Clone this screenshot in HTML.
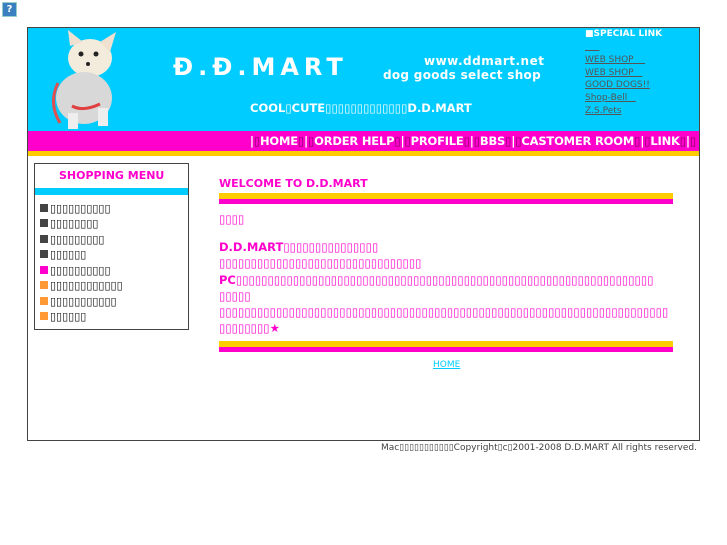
<!DOCTYPE html>
<html><head><meta charset="utf-8"><style>
*{margin:0;padding:0}
body{width:727px;height:545px;background:#fff;position:relative;font-family:"DejaVu Sans","Liberation Sans",sans-serif;overflow:hidden}
.a{position:absolute;white-space:nowrap}
.q{left:2px;top:2px;width:13px;height:13px;background:#3a7fc0;border:1px solid #9cc;color:#fff;font-size:10px;font-weight:bold;text-align:center;line-height:13px}
#box{left:27px;top:27px;width:671px;height:412px;border:1px solid #444}
#hd{left:28px;top:28px;width:671px;height:103px;background:#00ccff}
#nav{left:28px;top:131px;width:671px;height:20px;background:#ff00cc}
#yl{left:28px;top:151px;width:671px;height:5px;background:#ffcc00}
.nv{color:#fff;font-weight:bold;font-size:11.5px;top:134px;right:31px;letter-spacing:-0.2px}
.nv i{font-style:normal;color:#800060;font-weight:normal}
.sp{left:585px;font-size:9px;color:#555;text-decoration:underline}
.mn{left:40px;font-size:11px;color:#111}
.mn b{display:inline-block;width:8px;height:8px;margin-right:2px}
.pk{color:#ff00cc;font-size:11.5px;font-weight:bold}
</style></head><body>
<div class="a q">?</div>
<div class="a" id="box"></div>
<div class="a" id="hd"></div>
<svg class="a" style="left:38px;top:28px" width="95" height="103">
<ellipse cx="52" cy="30" rx="22" ry="19" fill="#f3ecdc"/>
<polygon points="32,18 30,2 45,14" fill="#f0e0d0"/><polygon points="62,14 78,4 72,24" fill="#f0e0d0"/>
<ellipse cx="46" cy="70" rx="28" ry="26" fill="#d8d8d8"/>
<path d="M20 55 Q10 75 22 95" stroke="#e05050" stroke-width="3" fill="none"/>
<rect x="30" y="85" width="10" height="16" fill="#eee"/><rect x="60" y="80" width="10" height="18" fill="#eee"/>
<path d="M34 78 Q45 84 62 76" stroke="#e04040" stroke-width="3" fill="none"/>
<circle cx="43" cy="26" r="2.5" fill="#222"/><circle cx="58" cy="26" r="2.5" fill="#222"/><circle cx="50" cy="36" r="2" fill="#222"/>
</svg>
<div class="a" style="left:173px;top:53px;font-size:24px;color:#fff;letter-spacing:5px;font-weight:bold">Đ.Đ.MART</div>
<div class="a" style="left:424px;top:54px;font-size:12px;color:#fff;letter-spacing:0.5px;font-weight:bold">www.ddmart.net</div>
<div class="a" style="left:383px;top:68px;font-size:12px;color:#fff;letter-spacing:0.3px;font-weight:bold">dog goods select shop</div>
<div class="a" style="left:250px;top:101px;font-size:11.5px;color:#fff;font-weight:bold">COOL▯CUTE▯▯▯▯▯▯▯▯▯▯▯▯▯D.D.MART</div>
<div class="a" style="left:585px;top:29px;font-size:9px;color:#fff;font-weight:bold">■SPECIAL LINK</div>
<div class="a sp" style="top:42px">&nbsp;&nbsp;&nbsp;&nbsp;&nbsp;</div>
<div class="a sp" style="top:55px">WEB SHOP&nbsp;&nbsp;&nbsp;&nbsp;</div>
<div class="a sp" style="top:68px">WEB SHOP&nbsp;&nbsp;&nbsp;</div>
<div class="a sp" style="top:80px">GOOD DOGS!!</div>
<div class="a sp" style="top:93px">Shop-Bell&nbsp;&nbsp;&nbsp;</div>
<div class="a sp" style="top:106px">Z.S.Pets</div>
<div class="a" id="nav"></div><div class="a" id="yl"></div>
<div class="a nv">|<i>▯</i>HOME<i>▯</i>|<i>▯</i>ORDER HELP<i>▯</i>|<i>▯</i>PROFILE<i>▯</i>|<i>▯</i>BBS<i>▯</i>|<i>▯</i>CASTOMER ROOM<i>▯</i>|<i>▯</i>LINK<i>▯</i>|<i>▯</i></div>
<div class="a" style="left:34px;top:163px;width:153px;height:165px;border:1px solid #444"></div>
<div class="a" style="left:35px;top:188px;width:153px;height:7px;background:#00ccff"></div>
<div class="a pk" style="left:59px;top:169px;font-size:11px">SHOPPING MENU</div>
<div class="a mn" style="top:202px"><b style="background:#444"></b>▯▯▯▯▯▯▯▯▯▯</div>
<div class="a mn" style="top:217px"><b style="background:#444"></b>▯▯▯▯▯▯▯▯</div>
<div class="a mn" style="top:233px"><b style="background:#444"></b>▯▯▯▯▯▯▯▯▯</div>
<div class="a mn" style="top:248px"><b style="background:#444"></b>▯▯▯▯▯▯</div>
<div class="a mn" style="top:264px"><b style="background:#ff00cc"></b>▯▯▯▯▯▯▯▯▯▯</div>
<div class="a mn" style="top:279px"><b style="background:#ff9933"></b>▯▯▯▯▯▯▯▯▯▯▯▯</div>
<div class="a mn" style="top:295px"><b style="background:#ff9933"></b>▯▯▯▯▯▯▯▯▯▯▯</div>
<div class="a mn" style="top:310px"><b style="background:#ff9933"></b>▯▯▯▯▯▯</div>
<div class="a pk" style="left:219px;top:177px;font-size:11px">WELCOME TO D.D.MART</div>
<div class="a" style="left:219px;top:193px;width:454px;height:6px;background:#ffcc00"></div>
<div class="a" style="left:219px;top:199px;width:454px;height:5px;background:#ff00cc"></div>
<div class="a pk" style="left:219px;top:212px">▯▯▯▯</div>
<div class="a pk" style="left:219px;top:239px;white-space:normal;width:460px;line-height:16.3px">D.D.MART▯▯▯▯▯▯▯▯▯▯▯▯▯▯▯<br>▯▯▯▯▯▯▯▯▯▯▯▯▯▯▯▯▯▯▯▯▯▯▯▯▯▯▯▯▯▯▯▯<br>PC▯▯▯▯▯▯▯▯▯▯▯▯▯▯▯▯▯▯▯▯▯▯▯▯▯▯▯▯▯▯▯▯▯▯▯▯▯▯▯▯▯▯▯▯▯▯▯▯▯▯▯▯▯▯▯▯▯▯▯▯▯▯▯▯▯▯<br>▯▯▯▯▯<br>▯▯▯▯▯▯▯▯▯▯▯▯▯▯▯▯▯▯▯▯▯▯▯▯▯▯▯▯▯▯▯▯▯▯▯▯▯▯▯▯▯▯▯▯▯▯▯▯▯▯▯▯▯▯▯▯▯▯▯▯▯▯▯▯▯▯▯▯▯▯▯<br>▯▯▯▯▯▯▯▯★</div>
<div class="a" style="left:219px;top:341px;width:454px;height:6px;background:#ffcc00"></div>
<div class="a" style="left:219px;top:347px;width:454px;height:5px;background:#ff00cc"></div>
<div class="a" style="left:433px;top:360px;font-size:9px;color:#00ccff;text-decoration:underline">HOME</div>
<div class="a" style="right:30px;top:443px;font-size:9px;color:#444">Mac▯▯▯▯▯▯▯▯▯▯▯Copyright▯c▯2001-2008 D.D.MART All rights reserved.</div>
</body></html>
